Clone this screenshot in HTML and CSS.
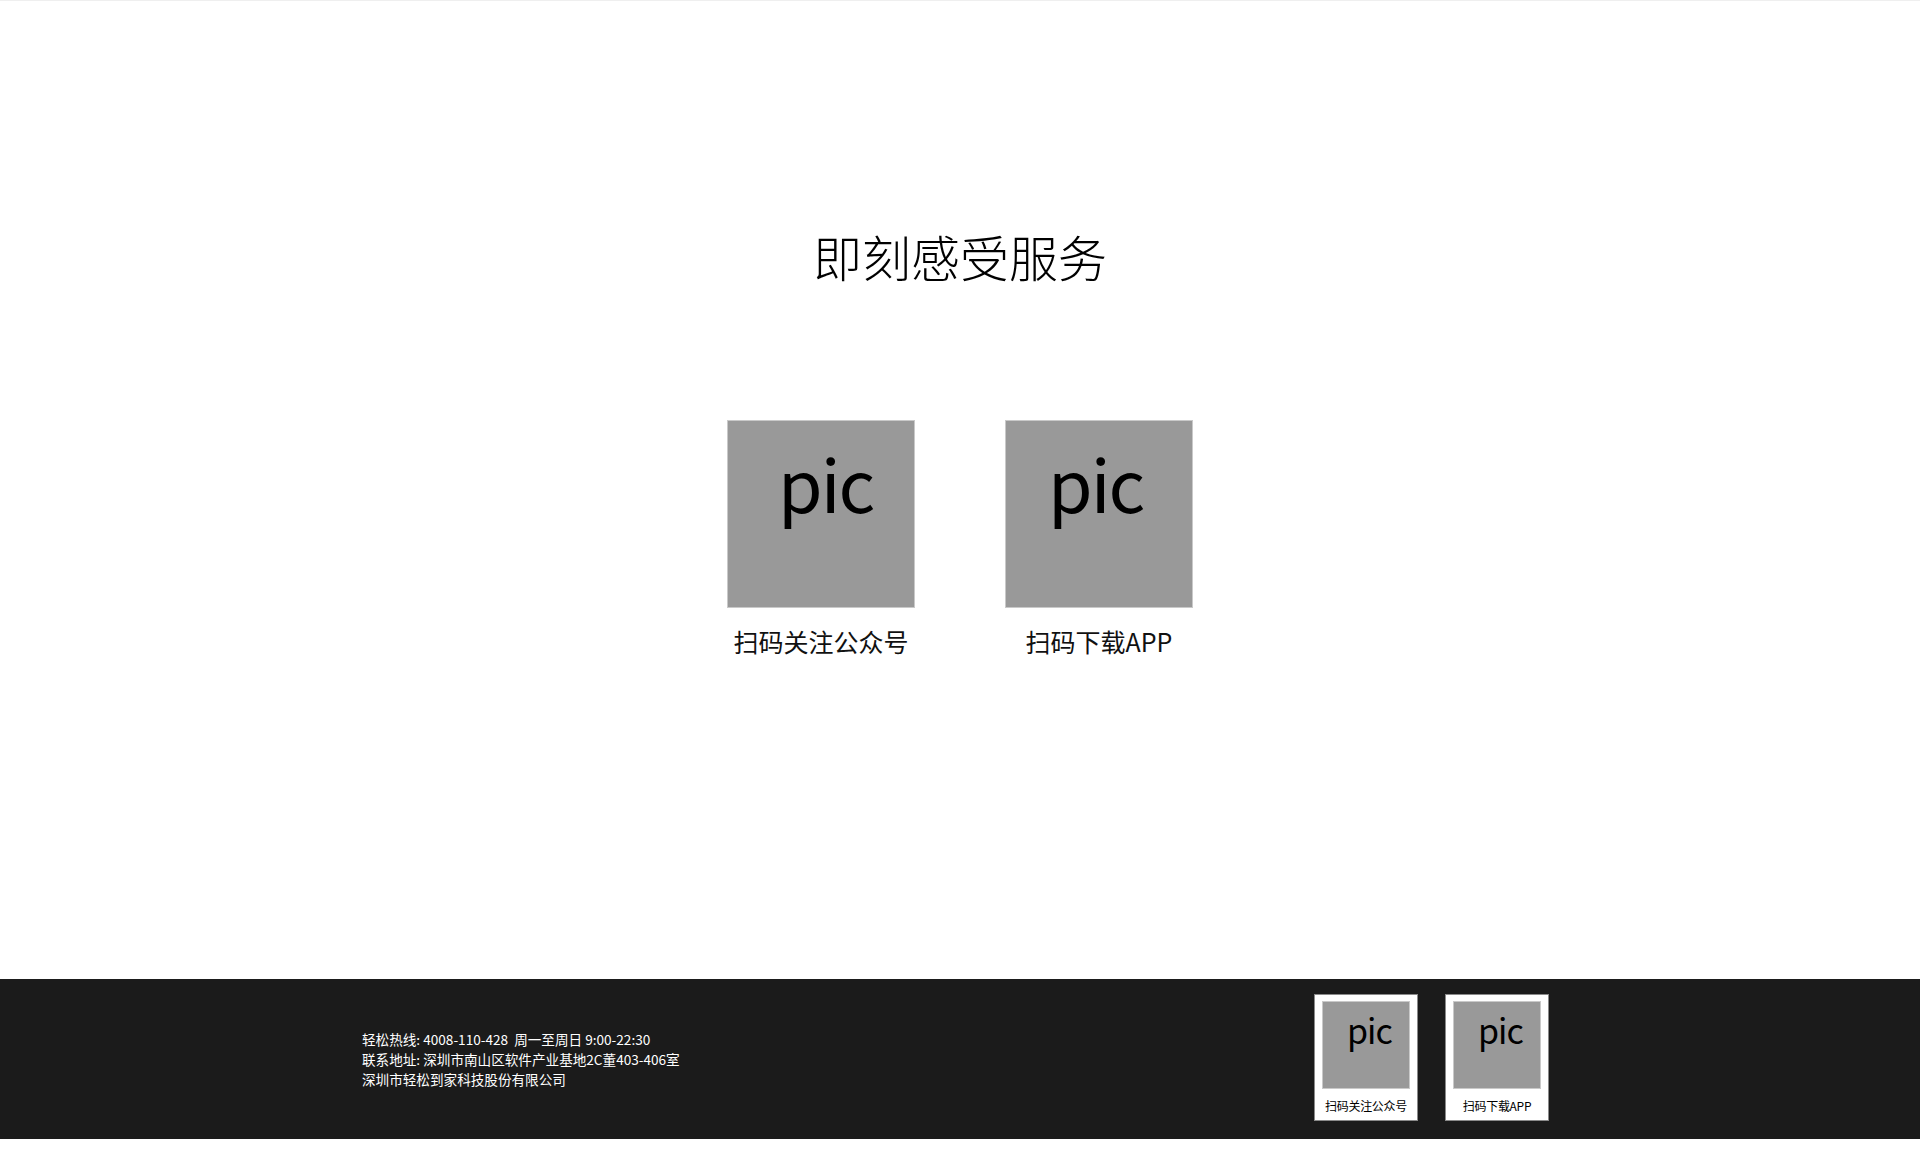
FILE: index.html
```html
<!DOCTYPE html>
<html lang="zh-CN">
<head>
<meta charset="utf-8">
<title>即刻感受服务</title>
<link rel="stylesheet" href="styles.css">
</head>
<body>
<div class="page">
  <main class="main">
    <h1 class="title">即刻感受服务</h1>
    <div class="codes">
      <div class="code">
        <div class="pic pic-a">pic</div>
        <div class="code-label">扫码关注公众号</div>
      </div>
      <div class="code">
        <div class="pic pic-b">pic</div>
        <div class="code-label">扫码下载APP</div>
      </div>
    </div>
  </main>
  <footer class="footer">
    <div class="footer-inner">
      <div class="info">
        <p>轻松热线: 4008-110-428&nbsp; 周一至周日 9:00-22:30</p>
        <p>联系地址: 深圳市南山区软件产业基地2C董403-406室</p>
        <p>深圳市轻松到家科技股份有限公司</p>
      </div>
      <div class="cards">
        <div class="card">
          <div class="card-pic">pic</div>
          <div class="card-label">扫码关注公众号</div>
        </div>
        <div class="card">
          <div class="card-pic">pic</div>
          <div class="card-label">扫码下载APP</div>
        </div>
      </div>
    </div>
  </footer>
</div>
</body>
</html>
```

FILE: styles.css
```css
* { box-sizing: border-box; }
html, body { margin: 0; padding: 0; background: #fff; }
body {
  font-family: "Noto Sans CJK SC", "Noto Sans", sans-serif;
  color: #000;
}
.page {
  border-top: 1px solid #efefef;
  padding-bottom: 12px;
}
.main {
  height: 978px;
  display: flex;
  flex-direction: column;
  align-items: center;
}
.title {
  margin: 220px 0 0;
  font-size: 49px;
  font-weight: 200;
  line-height: 70px;
  color: #000;
}
.codes {
  margin-top: 129px;
  display: flex;
  gap: 90px;
}
.code {
  width: 188px;
  display: flex;
  flex-direction: column;
  align-items: center;
}
.pic {
  width: 188px;
  height: 188px;
  background: #999;
  border: 1px solid #c9c9c9;
  font-size: 72px;
  line-height: 104px;
  letter-spacing: -2px;
  padding-top: 9px;
  color: #000;
}
.pic-a { padding-left: 50px; }
.pic-b { padding-left: 42px; }
.code-label {
  margin-top: 15px;
  font-size: 25px;
  line-height: 36px;
  color: #111;
}
.footer {
  height: 160px;
  background: #1b1b1b;
}
.footer-inner {
  width: 1200px;
  height: 100%;
  margin: 0 auto;
  display: flex;
  justify-content: space-between;
  align-items: center;
  padding: 0 11px 0 2px;
}
.info {
  margin-top: -1px;
}
.info p {
  margin: 0;
  font-size: 13.6px;
  line-height: 20px;
  color: #fff;
}
.cards {
  display: flex;
  gap: 27px;
  margin-top: -3px;
}
.card {
  width: 104px;
  height: 127px;
  background: #fff;
  border: 1px solid #8a8a8a;
  padding: 6px 7px 0 7px;
  display: flex;
  flex-direction: column;
  align-items: center;
}
.card-pic {
  width: 88px;
  height: 88px;
  background: #999;
  border: 1px solid #c9c9c9;
  font-size: 34px;
  line-height: 49px;
  letter-spacing: -1px;
  padding: 3px 0 0 24px;
  color: #000;
}
.card-label {
  margin-top: 8px;
  font-size: 12px;
  line-height: 17px;
  letter-spacing: -0.3px;
  color: #000;
  white-space: nowrap;
}
```
